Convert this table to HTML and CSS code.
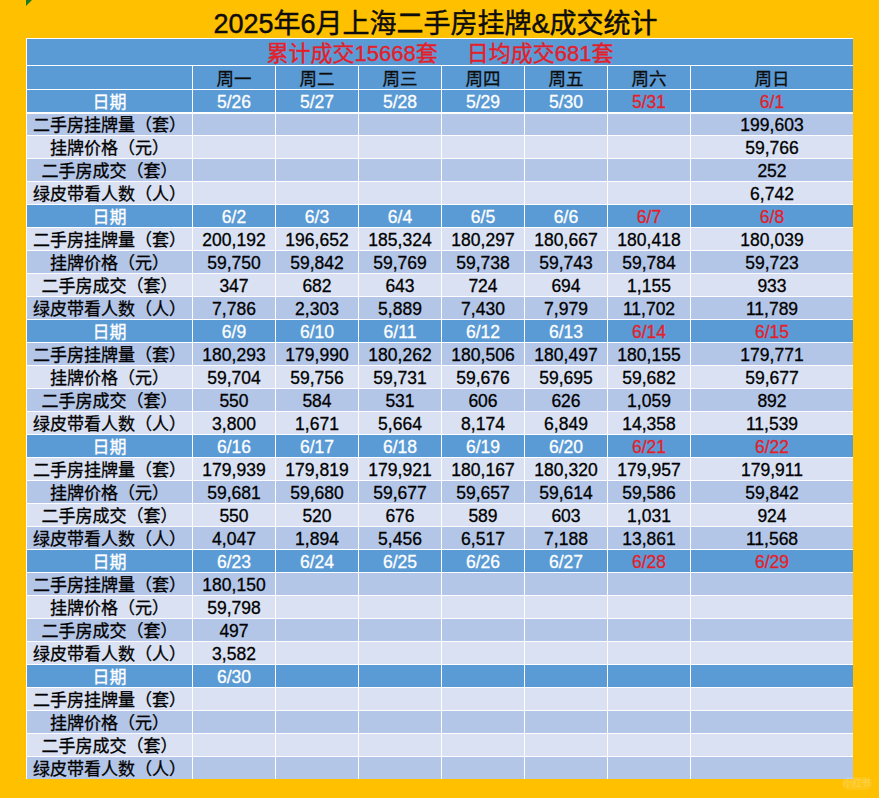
FILE: index.html
```html
<!DOCTYPE html>
<html lang="zh-CN">
<head>
<meta charset="utf-8">
<title>2025年6月上海二手房挂牌&amp;成交统计</title>
<link rel="stylesheet" href="styles.css">
</head>
<body>
<div class="corner-mark"></div>
<div class="page">
  <div class="title">2025年6月上海二手房挂牌&amp;成交统计</div>
  <div class="sheet">
    <div class="subtitle"><span>累计成交15668套</span><span class="sub-gap">日均成交681套</span></div>

    <div class="row blue week"><div class="c"></div><div class="c">周一</div><div class="c">周二</div><div class="c">周三</div><div class="c">周四</div><div class="c">周五</div><div class="c">周六</div><div class="c">周日</div></div>
    <div class="row blue date first-date"><div class="c">日期</div><div class="c">5/26</div><div class="c">5/27</div><div class="c">5/28</div><div class="c">5/29</div><div class="c">5/30</div><div class="c red">5/31</div><div class="c red">6/1</div></div>

    <div class="row dark"><div class="c">二手房挂牌量（套）</div><div class="c"></div><div class="c"></div><div class="c"></div><div class="c"></div><div class="c"></div><div class="c"></div><div class="c">199,603</div></div>
    <div class="row light"><div class="c">挂牌价格（元）</div><div class="c"></div><div class="c"></div><div class="c"></div><div class="c"></div><div class="c"></div><div class="c"></div><div class="c">59,766</div></div>
    <div class="row dark"><div class="c">二手房成交（套）</div><div class="c"></div><div class="c"></div><div class="c"></div><div class="c"></div><div class="c"></div><div class="c"></div><div class="c">252</div></div>
    <div class="row light"><div class="c">绿皮带看人数（人）</div><div class="c"></div><div class="c"></div><div class="c"></div><div class="c"></div><div class="c"></div><div class="c"></div><div class="c">6,742</div></div>

    <div class="row blue date"><div class="c">日期</div><div class="c">6/2</div><div class="c">6/3</div><div class="c">6/4</div><div class="c">6/5</div><div class="c">6/6</div><div class="c red">6/7</div><div class="c red">6/8</div></div>
    <div class="row light"><div class="c">二手房挂牌量（套）</div><div class="c">200,192</div><div class="c">196,652</div><div class="c">185,324</div><div class="c">180,297</div><div class="c">180,667</div><div class="c">180,418</div><div class="c">180,039</div></div>
    <div class="row dark"><div class="c">挂牌价格（元）</div><div class="c">59,750</div><div class="c">59,842</div><div class="c">59,769</div><div class="c">59,738</div><div class="c">59,743</div><div class="c">59,784</div><div class="c">59,723</div></div>
    <div class="row light"><div class="c">二手房成交（套）</div><div class="c">347</div><div class="c">682</div><div class="c">643</div><div class="c">724</div><div class="c">694</div><div class="c">1,155</div><div class="c">933</div></div>
    <div class="row dark"><div class="c">绿皮带看人数（人）</div><div class="c">7,786</div><div class="c">2,303</div><div class="c">5,889</div><div class="c">7,430</div><div class="c">7,979</div><div class="c">11,702</div><div class="c">11,789</div></div>

    <div class="row blue date"><div class="c">日期</div><div class="c">6/9</div><div class="c">6/10</div><div class="c">6/11</div><div class="c">6/12</div><div class="c">6/13</div><div class="c red">6/14</div><div class="c red">6/15</div></div>
    <div class="row dark"><div class="c">二手房挂牌量（套）</div><div class="c">180,293</div><div class="c">179,990</div><div class="c">180,262</div><div class="c">180,506</div><div class="c">180,497</div><div class="c">180,155</div><div class="c">179,771</div></div>
    <div class="row light"><div class="c">挂牌价格（元）</div><div class="c">59,704</div><div class="c">59,756</div><div class="c">59,731</div><div class="c">59,676</div><div class="c">59,695</div><div class="c">59,682</div><div class="c">59,677</div></div>
    <div class="row dark"><div class="c">二手房成交（套）</div><div class="c">550</div><div class="c">584</div><div class="c">531</div><div class="c">606</div><div class="c">626</div><div class="c">1,059</div><div class="c">892</div></div>
    <div class="row light"><div class="c">绿皮带看人数（人）</div><div class="c">3,800</div><div class="c">1,671</div><div class="c">5,664</div><div class="c">8,174</div><div class="c">6,849</div><div class="c">14,358</div><div class="c">11,539</div></div>

    <div class="row blue date"><div class="c">日期</div><div class="c">6/16</div><div class="c">6/17</div><div class="c">6/18</div><div class="c">6/19</div><div class="c">6/20</div><div class="c red">6/21</div><div class="c red">6/22</div></div>
    <div class="row light"><div class="c">二手房挂牌量（套）</div><div class="c">179,939</div><div class="c">179,819</div><div class="c">179,921</div><div class="c">180,167</div><div class="c">180,320</div><div class="c">179,957</div><div class="c">179,911</div></div>
    <div class="row dark"><div class="c">挂牌价格（元）</div><div class="c">59,681</div><div class="c">59,680</div><div class="c">59,677</div><div class="c">59,657</div><div class="c">59,614</div><div class="c">59,586</div><div class="c">59,842</div></div>
    <div class="row light"><div class="c">二手房成交（套）</div><div class="c">550</div><div class="c">520</div><div class="c">676</div><div class="c">589</div><div class="c">603</div><div class="c">1,031</div><div class="c">924</div></div>
    <div class="row dark"><div class="c">绿皮带看人数（人）</div><div class="c">4,047</div><div class="c">1,894</div><div class="c">5,456</div><div class="c">6,517</div><div class="c">7,188</div><div class="c">13,861</div><div class="c">11,568</div></div>

    <div class="row blue date"><div class="c">日期</div><div class="c">6/23</div><div class="c">6/24</div><div class="c">6/25</div><div class="c">6/26</div><div class="c">6/27</div><div class="c red">6/28</div><div class="c red">6/29</div></div>
    <div class="row dark"><div class="c">二手房挂牌量（套）</div><div class="c">180,150</div><div class="c"></div><div class="c"></div><div class="c"></div><div class="c"></div><div class="c"></div><div class="c"></div></div>
    <div class="row light"><div class="c">挂牌价格（元）</div><div class="c">59,798</div><div class="c"></div><div class="c"></div><div class="c"></div><div class="c"></div><div class="c"></div><div class="c"></div></div>
    <div class="row dark"><div class="c">二手房成交（套）</div><div class="c">497</div><div class="c"></div><div class="c"></div><div class="c"></div><div class="c"></div><div class="c"></div><div class="c"></div></div>
    <div class="row light"><div class="c">绿皮带看人数（人）</div><div class="c">3,582</div><div class="c"></div><div class="c"></div><div class="c"></div><div class="c"></div><div class="c"></div><div class="c"></div></div>

    <div class="row blue date"><div class="c">日期</div><div class="c">6/30</div><div class="c"></div><div class="c"></div><div class="c"></div><div class="c"></div><div class="c"></div><div class="c"></div></div>
    <div class="row light"><div class="c">二手房挂牌量（套）</div><div class="c"></div><div class="c"></div><div class="c"></div><div class="c"></div><div class="c"></div><div class="c"></div><div class="c"></div></div>
    <div class="row dark"><div class="c">挂牌价格（元）</div><div class="c"></div><div class="c"></div><div class="c"></div><div class="c"></div><div class="c"></div><div class="c"></div><div class="c"></div></div>
    <div class="row light"><div class="c">二手房成交（套）</div><div class="c"></div><div class="c"></div><div class="c"></div><div class="c"></div><div class="c"></div><div class="c"></div><div class="c"></div></div>
    <div class="row dark last"><div class="c">绿皮带看人数（人）</div><div class="c"></div><div class="c"></div><div class="c"></div><div class="c"></div><div class="c"></div><div class="c"></div><div class="c"></div></div>
  </div>
</div>
<div class="watermark">小红书</div>
</body>
</html>
```

FILE: styles.css
```css
* { box-sizing: border-box; }

html, body {
  margin: 0;
  padding: 0;
}

body {
  background: #FFC000;
  width: 879px;
  height: 798px;
  overflow: hidden;
  position: relative;
  font-family: "Liberation Sans", "Noto Sans CJK SC", sans-serif;
  color: #000;
}

.page {
  padding-left: 26px;
}

.title {
  width: 827px;
  height: 38px;
  padding-top: 9px;
  padding-right: 8px;
  line-height: 30px;
  font-size: 27px;
  text-align: center;
  white-space: nowrap;
  color: #0d0d0d;
  -webkit-text-stroke: 0.45px currentColor;
}

.sheet {
  width: 827px;
  border-top: 1px solid #fff;
  border-left: 1px solid #fff;
}

.subtitle {
  height: 27px;
  background: #5B9BD5;
  border-bottom: 1px solid #fff;
  padding-top: 3px;
  line-height: 24px;
  font-size: 22px;
  color: #E3202A;
  text-align: center;
  white-space: nowrap;
  -webkit-text-stroke: 0.4px currentColor;
}

.sub-gap {
  margin-left: 29px;
}

.row {
  display: grid;
  grid-template-columns: 166px repeat(6, 83px) 162px;
  height: 23px;
  font-size: 17.5px;
}

.c {
  border-right: 1px solid #fff;
  border-bottom: 1px solid #fff;
  padding-top: 4px;
  line-height: 19px;
  text-align: center;
  white-space: nowrap;
  -webkit-text-stroke: 0.3px currentColor;
}

.c:first-child {
  font-size: 17px;
}

.c:last-child {
  border-right: 0;
}

.blue { background: #5B9BD5; }
.dark { background: #B4C6E7; }
.light { background: #D9E1F2; }

.week .c { color: #0d0d0d; }
.date .c { color: #fff; }
.date .c.red { color: #E3202A; }

.first-date .c {
  border-bottom-width: 2px;
}

.last .c {
  border-bottom: 0;
}

.corner-mark {
  position: absolute;
  left: 26px;
  top: 0;
  width: 0;
  height: 0;
  border-top: 6px solid #1E7A24;
  border-right: 6px solid transparent;
}

.watermark {
  position: absolute;
  left: 842px;
  top: 777px;
  width: 30px;
  height: 13px;
  border-radius: 6px;
  background: rgba(255, 255, 255, 0.1);
  color: rgba(255, 255, 255, 0.25);
  font-size: 9px;
  line-height: 13px;
  text-align: center;
}
```
